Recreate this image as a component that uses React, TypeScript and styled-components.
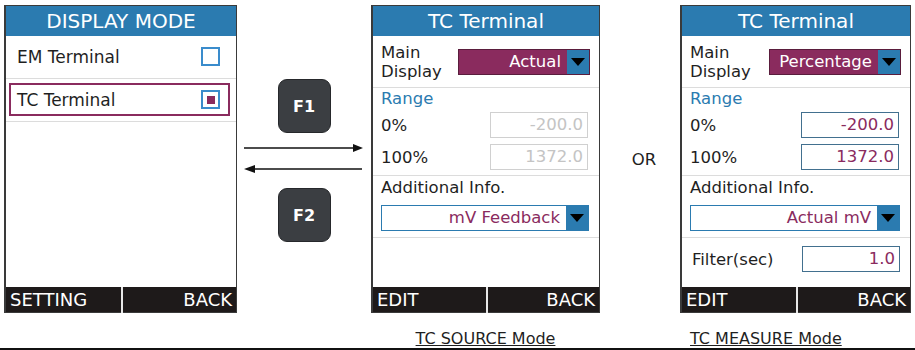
import React from "react";
import styled, { createGlobalStyle } from "styled-components";

const BLUE = "#2b7bb0";
const MAGENTA = "#8a2b5e";
const INK = "#1f1f1f";

const GlobalStyle = createGlobalStyle`
  html, body {
    margin: 0;
    padding: 0;
    background: #fff;
  }
  body {
    font-family: "DejaVu Sans", Verdana, sans-serif;
    color: ${INK};
  }
`;

const App = () => {
  return (
    <>
      <GlobalStyle />
      <Page>
        <Screen>
          <Header>DISPLAY MODE</Header>
          <ListRow>
            <Item>
              EM Terminal
              <Check />
            </Item>
          </ListRow>
          <ListRow>
            <Item $selected>
              TC Terminal
              <Check $checked />
            </Item>
          </ListRow>
          <Spacer />
          <SoftKeys>
            <SoftKey>SETTING</SoftKey>
            <SoftKey $right>BACK</SoftKey>
          </SoftKeys>
        </Screen>

        <Transition>
          <Key>F1</Key>
          <Arrows width="134" height="40" viewBox="0 0 134 40">
            <line x1="7" y1="6" x2="117" y2="6" stroke="#111" strokeWidth="1.4" />
            <polygon points="116,2 126,6 116,10" fill="#111" />
            <line x1="17" y1="27" x2="125" y2="27" stroke="#111" strokeWidth="1.4" />
            <polygon points="18,23 7,27 18,31" fill="#111" />
          </Arrows>
          <Key>F2</Key>
        </Transition>

        <TerminalScreen mode="source" />

        <Or>OR</Or>

        <TerminalScreen mode="measure" />

        <span />
        <span />
        <Caption>TC SOURCE Mode</Caption>
        <span />
        <Caption $left>TC MEASURE Mode</Caption>
      </Page>
    </>
  );
};

const TerminalScreen = ({ mode }: { mode: "source" | "measure" }) => {
  const measure = mode === "measure";
  return (
    <Screen>
      <Header>TC Terminal</Header>
      <MainRow>
        <TwoLine>
          Main
          <br />
          Display
        </TwoLine>
        <Select $filled $width={132}>
          <SelectValue>{measure ? "Percentage" : "Actual"}</SelectValue>
          <SelectArrow />
        </Select>
      </MainRow>
      <RangeSection>
        <SectionTitle>Range</SectionTitle>
        <FieldRow>
          0%
          <Field $disabled={!measure}>-200.0</Field>
        </FieldRow>
        <FieldRow>
          100%
          <Field $disabled={!measure}>1372.0</Field>
        </FieldRow>
      </RangeSection>
      <InfoSection>
        <Label>Additional Info.</Label>
        <Select>
          <SelectValue>{measure ? "Actual mV" : "mV Feedback"}</SelectValue>
          <SelectArrow />
        </Select>
      </InfoSection>
      {measure && (
        <FilterRow>
          Filter(sec)
          <Field>1.0</Field>
        </FilterRow>
      )}
      <Spacer />
      <SoftKeys>
        <SoftKey>EDIT</SoftKey>
        <SoftKey $right>BACK</SoftKey>
      </SoftKeys>
    </Screen>
  );
};

export default App;

// Styled Components
const Page = styled.div`
  box-sizing: border-box;
  width: 915px;
  height: 350px;
  padding: 5px 0 0 4px;
  border-bottom: 2px solid #111;
  display: grid;
  grid-template-columns: 233px 134px 229px 80px 231px;
  grid-template-rows: 308px 35px;
`;

const Screen = styled.div`
  box-sizing: border-box;
  height: 308px;
  border: 1px solid #3a3a3a;
  border-left-width: 2px;
  display: flex;
  flex-direction: column;
  background: #fff;
`;

const Header = styled.div`
  height: 30px;
  background: ${BLUE};
  color: #fff;
  font-size: 20px;
  line-height: 30px;
  text-align: center;
`;

const ListRow = styled.div`
  padding: 4px 6px 5px 3px;
  border-bottom: 1px solid #dcdcdc;
`;

const Item = styled.div<{ $selected?: boolean }>`
  box-sizing: border-box;
  height: 33px;
  display: flex;
  align-items: center;
  justify-content: space-between;
  padding: 0 8px 0 6px;
  border: 2px solid ${(p) => (p.$selected ? MAGENTA : "transparent")};
  font-size: 17px;
`;

const Check = styled.div<{ $checked?: boolean }>`
  box-sizing: border-box;
  width: 19px;
  height: 19px;
  border: 2px solid #3a8ccc;
  display: flex;
  align-items: center;
  justify-content: center;

  &::after {
    content: "";
    width: 8px;
    height: 8px;
    background: ${(p) => (p.$checked ? MAGENTA : "transparent")};
  }
`;

const Spacer = styled.div`
  flex: 1;
`;

const SoftKeys = styled.div`
  height: 25px;
  background: #1e1a1a;
  display: grid;
  grid-template-columns: 1fr 1fr;
`;

const SoftKey = styled.div<{ $right?: boolean }>`
  color: #fff;
  font-size: 18px;
  line-height: 26px;
  padding: 0 4px;
  text-align: ${(p) => (p.$right ? "right" : "left")};
  border-left: ${(p) => (p.$right ? "2px solid #e8e8e8" : "none")};
`;

const Transition = styled.div`
  display: flex;
  flex-direction: column;
  align-items: center;
  padding-top: 74px;
`;

const Key = styled.div`
  box-sizing: border-box;
  width: 53px;
  height: 54px;
  border-radius: 9px;
  background: #3b3e42;
  border: 1px solid #26282b;
  color: #fff;
  font-weight: bold;
  font-size: 16px;
  display: flex;
  align-items: center;
  justify-content: center;
`;

const Arrows = styled.svg`
  display: block;
  margin: 9px 0 6px;
`;

const Or = styled.div`
  display: flex;
  align-items: center;
  justify-content: center;
  padding-left: 8px;
  font-size: 16.5px;
`;

const MainRow = styled.div`
  height: 51px;
  display: flex;
  align-items: center;
  justify-content: space-between;
  padding: 0 9px 0 8px;
  border-bottom: 1px solid #dcdcdc;
`;

const TwoLine = styled.div`
  font-size: 16.5px;
  line-height: 19px;
`;

const Select = styled.div<{ $filled?: boolean; $width?: number }>`
  box-sizing: border-box;
  height: 26px;
  width: ${(p) => (p.$width ? `${p.$width}px` : "auto")};
  display: flex;
  border: 1px solid ${(p) => (p.$filled ? "#5a1d3d" : BLUE)};
  background: ${(p) => (p.$filled ? MAGENTA : "#fff")};
  color: ${(p) => (p.$filled ? "#fff" : MAGENTA)};
`;

const SelectValue = styled.div`
  flex: 1;
  text-align: right;
  padding-right: 6px;
  font-size: 16.5px;
  line-height: 24px;
  white-space: nowrap;
`;

const SelectArrow = styled.div`
  width: 22px;
  background: ${BLUE};
  display: flex;
  align-items: center;
  justify-content: center;

  &::after {
    content: "";
    border-left: 7px solid transparent;
    border-right: 7px solid transparent;
    border-top: 8px solid #000;
  }
`;

const RangeSection = styled.div`
  padding: 1px 11px 5px 8px;
  border-bottom: 1px solid #dcdcdc;
  display: flex;
  flex-direction: column;
  gap: 6px;
`;

const SectionTitle = styled.div`
  color: ${BLUE};
  font-size: 16.5px;
  line-height: 20px;
  margin-bottom: -3px;
`;

const FieldRow = styled.div`
  display: flex;
  align-items: center;
  justify-content: space-between;
  font-size: 16.5px;
`;

const Field = styled.div<{ $disabled?: boolean }>`
  box-sizing: border-box;
  width: 98px;
  height: 26px;
  border: 1.5px solid ${(p) => (p.$disabled ? "#d0d0d0" : "#42708f")};
  color: ${(p) => (p.$disabled ? "#c4c4c4" : MAGENTA)};
  font-size: 16.5px;
  line-height: 23px;
  text-align: right;
  padding-right: 4px;
`;

const InfoSection = styled.div`
  padding: 2px 10px 6px 8px;
  border-bottom: 1px solid #dcdcdc;
  display: flex;
  flex-direction: column;
  gap: 7px;
`;

const Label = styled.div`
  font-size: 16.5px;
  line-height: 20px;
`;

const FilterRow = styled.div`
  display: flex;
  align-items: center;
  justify-content: space-between;
  padding: 8px 10px 0 10px;
  font-size: 16.5px;
`;

const Caption = styled.div<{ $left?: boolean }>`
  padding-top: 18px;
  padding-left: ${(p) => (p.$left ? "10px" : "0")};
  text-align: ${(p) => (p.$left ? "left" : "center")};
  font-size: 16px;
  line-height: 16px;
  text-decoration: underline;
  text-underline-offset: 1px;
`;
